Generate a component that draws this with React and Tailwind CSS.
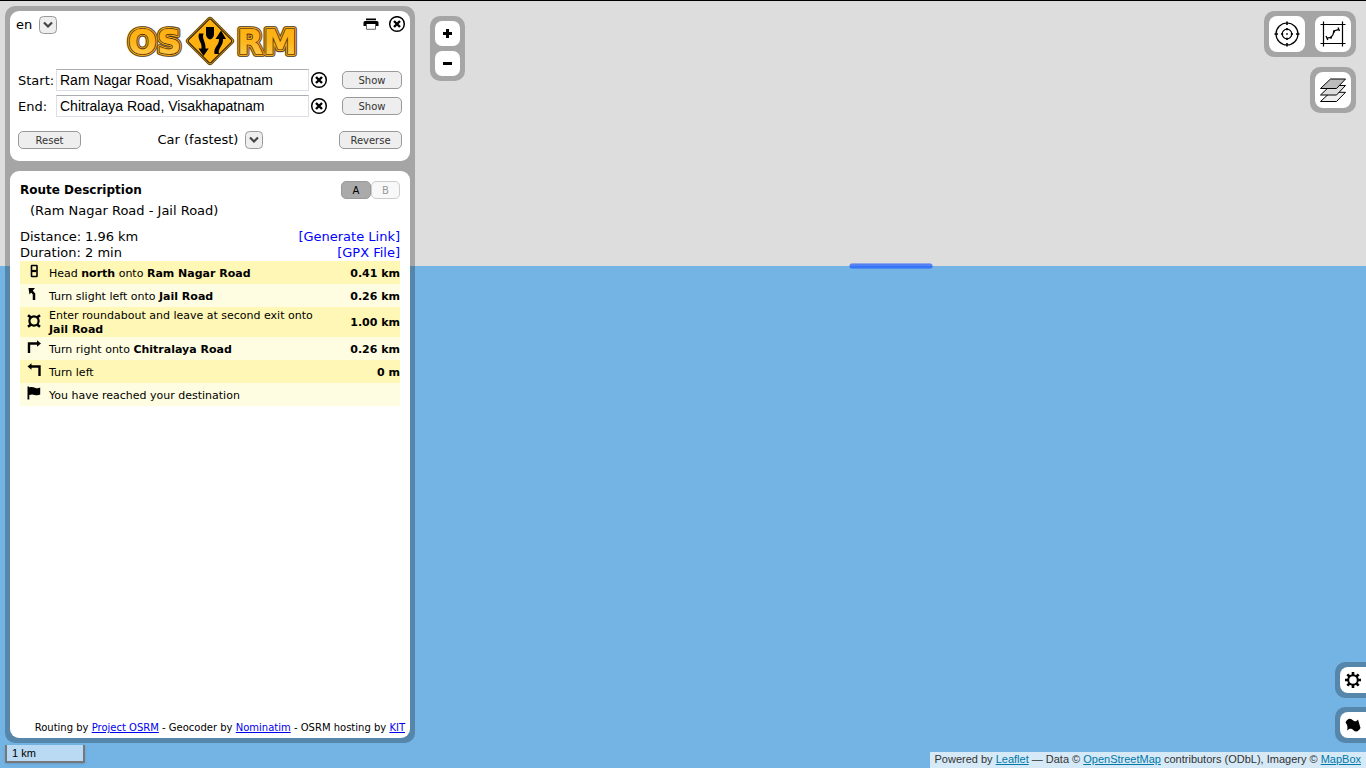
const steps = [
  { icon: 'head', text: <>Head <b>north</b> onto <b>Ram Nagar Road</b></>, dist: '0.41 km' },
  { icon: 'slight', text: <>Turn slight left onto <b>Jail Road</b></>, dist: '0.26 km' },
  { icon: 'round', text: <>Enter roundabout and leave at second exit onto <b>Jail Road</b></>, dist: '1.00 km' },
  { icon: 'right', text: <>Turn right onto <b>Chitralaya Road</b></>, dist: '0.26 km' },
  { icon: 'left', text: <>Turn left</>, dist: '0 m' },
  { icon: 'flag', text: <>You have reached your destination</>, dist: '' },
];

const stepShapes = {
  head: (
    <g fill="none" stroke="#000">
      <rect x="4.500" y="1.500" width="5.500" height="11" rx="0.500" strokeWidth="1.600" />
      <path d="M5 7h4.500" strokeWidth="2.200" />
    </g>
  ),
  slight: (
    <g>
      <path d="M1.500 1h6.500L2.500 7.500z" />
      <path d="M4 3.500L7 7V13" fill="none" stroke="#000" strokeWidth="2.500" />
    </g>
  ),
  round: (
    <g fill="none" stroke="#000">
      <circle cx="7" cy="7" r="4.600" strokeWidth="2.200" />
      <path d="M1 1.200l3 2.300M13 1.200l-3 2.300M1 12.800l3-2.300M13 12.800l-3-2.300" strokeWidth="2.600" />
    </g>
  ),
  right: (
    <g>
      <path d="M2 13V3.500h9" fill="none" stroke="#000" strokeWidth="2.400" />
      <path d="M10 0.300l4 3.200-4 3.200z" />
    </g>
  ),
  left: (
    <g>
      <path d="M12.500 13V3.500H4" fill="none" stroke="#000" strokeWidth="2.400" />
      <path d="M4.500 0.300L0.500 3.500l4 3.200z" />
    </g>
  ),
  flag: <path d="M0.500 0.500h1.700v1C4.500.700 6 1 8 1.800s3.500.700 5.200-.200v7c-2 1-4 .800-5.500.300S4.500 8 2.300 9V13.500H.500z" />,
};

function StepIcon({ name }) {
  return (
    <svg width="15" height="15" viewBox="0 0 15 15" className="mx-auto block" aria-hidden="true">
      {stepShapes[name]}
    </svg>
  );
}

function CloseIcon() {
  return (
    <svg width="18" height="18" viewBox="0 0 18 18" className="block" aria-hidden="true">
      <circle cx="9" cy="9" r="7.3" fill="#fff" stroke="#000" strokeWidth="1.5" />
      <path d="M6 6l6 6M12 6l-6 6" stroke="#000" strokeWidth="2.4" />
    </svg>
  );
}

function Picker({ id, label, options }) {
  return (
    <div className="inline-grid items-center">
      <select id={id} aria-label={label} className="col-start-1 row-start-1 h-6 appearance-none bg-transparent pr-6 text-[13px] leading-6">
        {options.map((o) => <option key={o}>{o}</option>)}
      </select>
      <svg width="18" height="18" viewBox="0 0 18 18" className="pointer-events-none col-start-1 row-start-1 justify-self-end" aria-hidden="true">
        <rect x="0.500" y="0.500" width="17" height="17" rx="4" fill="#eee" stroke="#999" />
        <path d="M5 6.500l4 4 4-4" fill="none" stroke="#444" strokeWidth="2.200" />
      </svg>
    </div>
  );
}

const buttonStyle = 'h-[18px] rounded-[5px] border border-[#999] bg-[#eee] pt-px text-center text-[10px] leading-4 text-[#333]';

function Place({ id, label, value }) {
  return (
    <div className="flex h-[22px] items-center">
      <label htmlFor={id} className="w-[38px] pt-[2px] text-[13px]">{label}</label>
      <input
        id={id}
        defaultValue={value}
        className="h-[22px] min-w-0 flex-1 border border-[#dcdfe6] border-t-[#abadb3] px-[3px] font-['Liberation_Sans',Arial,sans-serif] text-[14px]"
      />
      <button aria-label={`Clear ${label}`} className="ml-px mr-[14px]"><CloseIcon /></button>
      <button className={`${buttonStyle} w-[60px]`}>Show</button>
    </div>
  );
}

function Logo() {
  return (
    <svg width="176" height="56" viewBox="-1 0 176 56" className="block" role="img" aria-label="OSRM">
      <defs>
        <linearGradient id="gold" x1="0" y1="0" x2="0" y2="1">
          <stop offset="0" stopColor="#ffae0c" />
          <stop offset="0.5" stopColor="#ffb51c" />
          <stop offset="1" stopColor="#ffd467" />
        </linearGradient>
      </defs>
      <g fontFamily="'DejaVu Sans', Verdana, sans-serif" fontWeight="bold" fontSize="34" strokeLinejoin="round">
        {[['OS', 4], ['RM', 113]].map(([word, x]) => (
          <g key={word}>
            <text x={x} y="41" stroke="#857a68" strokeWidth="6" aria-hidden="true">{word}</text>
            <text x={x} y="41" stroke="#4d3a14" strokeWidth="5" aria-hidden="true">{word}</text>
            <text x={x} y="41" stroke="#f5a81a" strokeWidth="3.800" aria-hidden="true">{word}</text>
            <text x={x} y="41" stroke="#1c1200" strokeWidth="1.600">{word}</text>
            <text x={x} y="41" fill="url(#gold)" stroke="#ffb82a" strokeWidth="0.300" aria-hidden="true">{word}</text>
          </g>
        ))}
      </g>
      <rect x="68.500" y="10.500" width="35" height="35" rx="3" transform="rotate(45 86 28)" fill="#ffb31c" stroke="#6b4e14" strokeWidth="1.200" />
      <rect x="70" y="12" width="32" height="32" rx="2" transform="rotate(45 86 28)" fill="#ffb20f" stroke="#241800" strokeWidth="1" />
      <path d="M82 14h8v7c0 3-1.500 4.500-4 5.500-2.500-1-4-2.500-4-5.500z" />
      <path d="M75 20.500h4.500c-2 5.500 2.500 8 2 15h3.200L79.500 43 74.500 35.500h3C78.500 29.500 73 27 75 20.500z" />
      <path d="M90.500 41h4.500c-1.500-6 4.500-8 4-15h3L97 17.500 91.500 26H95c.5 6-6 8.500-4.500 15z" />
    </svg>
  );
}

const mapBox = 'bg-black/25';
const mapButton = 'flex items-center justify-center bg-white';

export default function App() {
  return (
    <div className="relative isolate flex min-h-screen flex-col overflow-hidden border-t border-black font-['DejaVu_Sans',Verdana,sans-serif] text-[13px] leading-4 text-black">
      <div className="absolute inset-0 -z-10 flex flex-col bg-[#ddd]">
        <div className="h-[265px] shrink-0" />
        <div className="flex-1 bg-[#73b4e5]" />
        <svg className="absolute left-[848px] top-[261px]" width="86" height="8" viewBox="0 0 86 8" aria-label="Route">
          <path d="M4 4h78" stroke="#0033ff" strokeOpacity="0.5" strokeWidth="5" strokeLinecap="round" />
          <path d="M4 4h78" stroke="#3377ff" strokeOpacity="0.4" strokeWidth="5" strokeLinecap="round" />
        </svg>
      </div>

      <div className="flex flex-1 items-start">
        <aside className={`${mapBox} mb-[25px] ml-[5px] mt-[5px] flex w-[410px] shrink-0 flex-col gap-[10px] self-stretch rounded-[10px] p-[5px]`}>
          <section className="flex flex-col rounded-[9px] bg-white px-2 pb-[9px]">
            <header className="-ml-[2px] -mr-1 flex h-[58px] items-start justify-between">
              <div className="w-[108px] pt-[2px]">
                <Picker id="lang" label="Language" options={['en']} />
              </div>
              <div className="pt-[2px]"><Logo /></div>
              <div className="flex w-[108px] items-center justify-end gap-[9px] pt-1">
                <button aria-label="Print">
                  <svg width="16" height="14" viewBox="0 0 16 14" className="block" aria-hidden="true">
                    <path d="M3 1.500h10v1.800H3zM2 4h12a1.500 1.500 0 0 1 1.500 1.500V9H13V7H3v2H.500V5.500A1.500 1.500 0 0 1 2 4z" />
                    <path d="M3.500 7v5.300h9V7" fill="#fff" stroke="#666" />
                  </svg>
                </button>
                <button aria-label="Close"><CloseIcon /></button>
              </div>
            </header>
            <div className="flex flex-col gap-1">
              <Place id="start" label="Start:" value="Ram Nagar Road, Visakhapatnam" />
              <Place id="end" label="End:" value="Chitralaya Road, Visakhapatnam" />
            </div>
            <div className="mt-[11px] flex items-center justify-between">
              <button className={`${buttonStyle} w-[63px]`}>Reset</button>
              <Picker id="profile" label="Profile" options={['Car (fastest)']} />
              <button className={`${buttonStyle} w-[63px]`}>Reverse</button>
            </div>
          </section>

          <section className="flex flex-1 flex-col rounded-[9px] bg-white px-[10px] pb-[3px] pt-[10px]">
            <div className="flex items-center justify-between">
              <h1 className="text-[12px] font-bold">Route Description</h1>
              <div className="flex">
                <button className="h-[18px] w-[30px] rounded-[5px] border border-[#999] bg-[#aaa] pt-px text-[10px] leading-4">A</button>
                <button className="h-[18px] w-[29px] rounded-[5px] border border-[#ccc] bg-[#f8f8f8] pt-px text-[10px] leading-4 text-[#999]">B</button>
              </div>
            </div>
            <p className="ml-[10px] mt-1">(Ram Nagar Road - Jail Road)</p>
            <div className="mt-[10px] flex justify-between">
              <dl className="grid grid-cols-[65px_auto]">
                <dt>Distance:</dt><dd>1.96 km</dd>
                <dt>Duration:</dt><dd>2 min</dd>
              </dl>
              <div className="text-right text-[#00f]">
                <div><a href="#link">[Generate Link]</a></div>
                <div><a href="#gpx">[GPX File]</a></div>
              </div>
            </div>
            <table className="w-full border-collapse text-[11px] leading-[14px]">
              <tbody>
                {steps.map((s) => (
                  <tr key={s.icon} className="h-[23px] odd:bg-[#fff7b5] even:bg-[#fffde1]">
                    <td className="w-[29px] px-0 pb-[2px] pt-0 align-middle"><StepIcon name={s.icon} /></td>
                    <td className="px-0 pb-0 pt-[2px]">{s.text}</td>
                    <td className="w-[68px] px-0 pb-0 pt-[2px] text-right font-bold">{s.dist}</td>
                  </tr>
                ))}
              </tbody>
            </table>
            <p className="-mr-[5px] mt-auto whitespace-nowrap text-right text-[10px] leading-[14px]">
              Routing by <a href="#osrm" className="text-[#00e] underline">Project OSRM</a> - Geocoder by{' '}
              <a href="#nominatim" className="text-[#00e] underline">Nominatim</a> - OSRM hosting by{' '}
              <a href="#kit" className="text-[#00e] underline">KIT</a>
            </p>
          </section>
        </aside>

        <nav aria-label="Zoom" className={`${mapBox} ml-[15px] mt-[15px] flex flex-col gap-[5px] rounded-[10px] p-[5px]`}>
          <button aria-label="Zoom in" className={`${mapButton} size-[25px] rounded-[7px]`}>
            <svg width="9" height="9" viewBox="0 0 9 9" aria-hidden="true"><path d="M3 0h3v3h3v3H6v3H3V6H0V3h3z" /></svg>
          </button>
          <button aria-label="Zoom out" className={`${mapButton} size-[25px] rounded-[7px]`}>
            <svg width="9" height="9" viewBox="0 0 9 9" aria-hidden="true"><path d="M0 3h9v3H0z" /></svg>
          </button>
        </nav>

        <div className="ml-auto flex flex-col self-stretch pb-[25px] pt-[10px]">
          <div className={`${mapBox} mr-[10px] flex gap-[10px] self-end rounded-[10px] p-[5px]`}>
            <button aria-label="Locate" className={`${mapButton} size-9 rounded-[8px]`}>
              <svg width="26" height="26" viewBox="0 0 26 26" fill="none" stroke="#000" strokeWidth="1.200" aria-hidden="true">
                <circle cx="13" cy="13" r="11" />
                <circle cx="13" cy="13" r="4.800" />
                <path d="M13 .500v3.500M13 22v3.500M.500 13h3.500M22 13h3.500M13 7v2.200M13 16.800v2.200M7 13h2.200M16.800 13h2.200M12.200 13h1.600" strokeWidth="1.600" />
              </svg>
            </button>
            <button aria-label="Fit route" className={`${mapButton} size-9 rounded-[8px]`}>
              <svg width="26" height="26" viewBox="0 0 26 26" fill="none" stroke="#000" strokeWidth="1.200" aria-hidden="true">
                <path d="M3.500 .500v25M22.500 .500v25M.500 3.500h25M.500 22.500h25" />
                <path d="M6 15l1.800 4M7 17.200l4-.700 2-3 1-3.500 5-1.700M18 6.500l1.500 3.500" strokeWidth="1.300" />
                <path d="M10 15.500h2v2h-2zM13 9.500h2v2h-2z" fill="#000" stroke="none" />
              </svg>
            </button>
          </div>
          <div className={`${mapBox} mr-[10px] mt-[10px] self-end rounded-[10px] p-[5px]`}>
            <button aria-label="Layers" className={`${mapButton} size-9 rounded-[8px]`}>
              <svg width="28" height="26" viewBox="0 0 28 26" stroke="#000" strokeWidth="1" aria-hidden="true">
                <path d="M1.500 24.500l10-9.200h15l-9 9.200z" fill="#eee" />
                <path d="M1.500 18l10-9.500h15l-9 9.500z" fill="#ddd" />
                <path d="M1.500 11.500l10-9.500h15l-9 9.500z" fill="#bbb" />
              </svg>
            </button>
          </div>
          <div className={`${mapBox} mt-auto self-end rounded-l-[10px] py-[5px] pl-[5px]`}>
            <button aria-label="Settings" className={`${mapButton} size-[26px] rounded-l-[8px]`}>
              <svg width="18" height="18" viewBox="0 0 18 18" fill="none" stroke="#000" aria-hidden="true">
                <circle cx="9" cy="9" r="4.800" strokeWidth="2" />
                <path d="M9 1v3M9 14v3M1 9h3M14 9h3M3.300 3.300l2.200 2.200M12.500 12.500l2.200 2.200M3.300 14.700l2.200-2.200M12.500 5.500l2.200-2.200" strokeWidth="2.600" />
              </svg>
            </button>
          </div>
          <div className={`${mapBox} mt-[9px] self-end rounded-l-[10px] py-[5px] pl-[5px]`}>
            <button aria-label="Mapping tools" className={`${mapButton} size-[26px] rounded-l-[8px]`}>
              <svg width="18" height="16" viewBox="0 0 18 16" aria-hidden="true">
                <path d="M1.500 5.500C3.500 1.500 6 1 8.500 3S12.500 4.500 14 2.500L16.500 11C14.500 14.500 12 15.500 9.500 13.300S5.500 11.500 3 13.500C4 10.500 3.500 7.500 1.500 5.500z" />
              </svg>
            </button>
          </div>
        </div>
      </div>

      <div className="absolute bottom-[5px] left-[5px] h-[18px] w-20 border-2 border-t-0 border-[#777] bg-white/50 px-[5px] font-['Liberation_Sans',Arial,sans-serif] text-[11px] leading-4 shadow-sm">1 km</div>
      <footer className="absolute bottom-0 right-0 bg-white/70 px-[5px] pb-[2px] font-['Liberation_Sans',Arial,sans-serif] text-[11px] leading-[14px] text-[#333]">
        Powered by <a href="#leaflet" className="text-[#0078a8] underline">Leaflet</a> — Data © <a href="#osm" className="text-[#0078a8] underline">OpenStreetMap</a> contributors (ODbL), Imagery © <a href="#mapbox" className="text-[#0078a8] underline">MapBox</a>
      </footer>
    </div>
  );
}
